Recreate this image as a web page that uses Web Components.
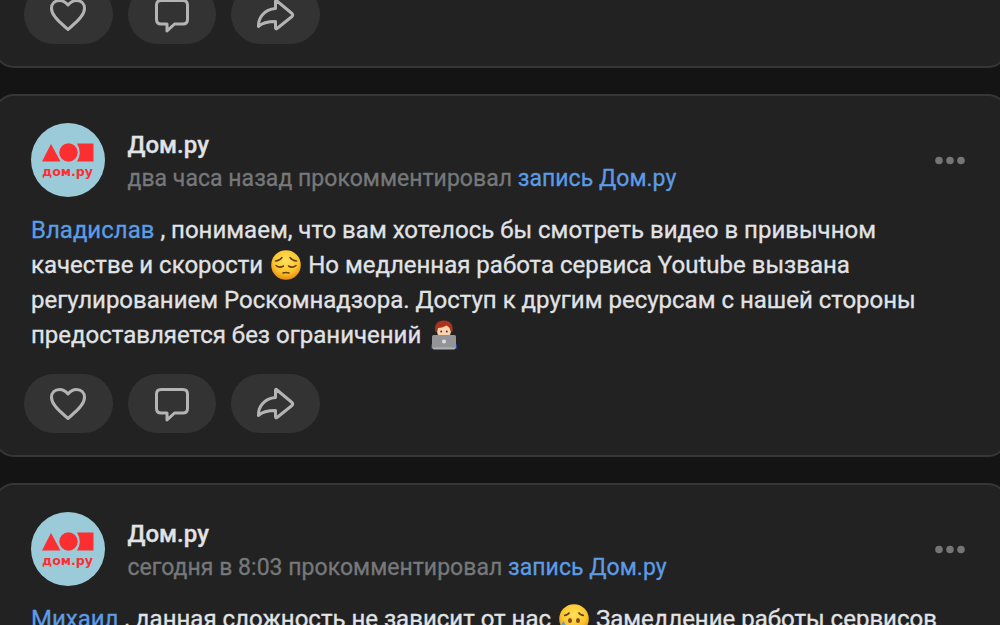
<!DOCTYPE html>
<html lang="ru">
<head>
<meta charset="utf-8">
<title>Дом.ру</title>
<style>
  body {
    margin: 0;
    height: 625px;
    overflow: hidden;
    background: #141414;
    color: #e1e3e6;
    font: 24px/35px Roboto, "Noto Sans", sans-serif;
    -webkit-text-stroke: .3px;
  }

  a { color: #5c9ce6; text-decoration: none; }
  .line { display: block; height: 35px; white-space: pre; }
</style>
</head>
<body>
<wall-feed>
  <wall-post class="previous"></wall-post>

  <wall-post>
    <post-header slot="header">
      <span slot="name">Дом.ру</span>
      <span class="meta">два часа назад прокомментировал <a>запись Дом.ру</a></span>
    </post-header>
    <span class="line"><a>Владислав</a> , понимаем, что вам хотелось бы смотреть видео в привычном</span>
    <span class="line">качестве и скорости <emoji-icon name="pensive"></emoji-icon> Но медленная работа сервиса Youtube вызвана</span>
    <span class="line">регулированием Роскомнадзора. Доступ к другим ресурсам с нашей стороны</span>
    <span class="line">предоставляется без ограничений <emoji-icon name="coder"></emoji-icon></span>
  </wall-post>

  <wall-post>
    <post-header slot="header">
      <span slot="name">Дом.ру</span>
      <span class="meta">сегодня в 8:03 прокомментировал <a>запись Дом.ру</a></span>
    </post-header>
    <span class="line"><a>Михаил</a> , данная сложность не зависит от нас <emoji-icon name="tear"></emoji-icon> Замедление работы сервисов</span>
  </wall-post>
</wall-feed>

<script>
class WallFeed extends HTMLElement {
  constructor() {
    super();
    this.attachShadow({ mode: "open" });
    this.shadowRoot.innerHTML = /* html */`
    <style>
      :host {
        display: flex;
        flex-direction: column;
        gap: 26px;
        margin: -40px -8px 0 -6px;
      }
    </style>
    <slot></slot>`;
  }
}

class WallPost extends HTMLElement {
  constructor() {
    super();
    this.attachShadow({ mode: "open" });
  }

  static get styles() {
    return /* css */`
      :host {
        display: flex;
        flex-direction: column;
        flex: none;
        box-sizing: border-box;
        height: 363px;
        padding: 27px 41px 22px 35px;
        background: #222;
        border: 2px solid #363637;
        border-radius: 20px;
      }

      :host(.previous) {
        height: 108px;
        padding-top: 0;
      }

      .text {
        margin-top: 16px;
      }

      :host(.previous) .text {
        display: none;
      }

      footer {
        display: flex;
        gap: 15px;
        margin: auto 0 0 -7px;
      }
    `;
  }

  connectedCallback() {
    this.shadowRoot.innerHTML = /* html */`
    <style>${WallPost.styles}</style>
    <slot name="header"></slot>
    <div class="text"><slot></slot></div>
    <footer>
      <action-button icon="like"></action-button>
      <action-button icon="comment"></action-button>
      <action-button icon="share"></action-button>
    </footer>`;
  }
}

class PostHeader extends HTMLElement {
  constructor() {
    super();
    this.attachShadow({ mode: "open" });
  }

  static get styles() {
    return /* css */`
      :host {
        display: flex;
        align-items: center;
        height: 74px;
      }

      .info {
        flex: 1;
        margin-left: 22.500px;
        padding-top: 4px;
        line-height: 33px;
        white-space: nowrap;
      }

      .name {
        font-weight: 500;
      }

      .when {
        font-size: 23px;
        letter-spacing: .03px;
        color: #76787a;
      }

      .more {
        width: 30px;
        height: 10px;
        fill: #757575;
      }
    `;
  }

  connectedCallback() {
    this.shadowRoot.innerHTML = /* html */`
    <style>${PostHeader.styles}</style>
    <brand-avatar></brand-avatar>
    <div class="info">
      <div class="name"><slot name="name"></slot></div>
      <div class="when"><slot></slot></div>
    </div>
    <svg class="more" viewBox="0 0 30 10">
      <circle cx="4" cy="5.500" r="3.8"/><circle cx="15" cy="5.500" r="3.8"/><circle cx="26" cy="5.500" r="3.8"/>
    </svg>`;
  }
}

class BrandAvatar extends HTMLElement {
  constructor() {
    super();
    this.attachShadow({ mode: "open" });
    this.shadowRoot.innerHTML = /* html */`
    <style>
      :host { display: block; width: 74px; height: 74px; }
      svg { display: block; }
      text { font: bold 12.500px "DejaVu Sans", sans-serif; }
    </style>
    <svg width="74" height="74" viewBox="0 0 74 74">
      <circle cx="37" cy="37" r="37" fill="#9bcbd9"/>
      <g fill="#fb2f32">
        <path d="M11 38.500 20 21 29.500 38.500Z"/>
        <circle cx="37.500" cy="29.500" r="9.200"/>
        <path d="M46 20.500H62.500V38.500H46Q51.500 29.500 46 20.500Z"/>
        <text x="11" y="53" textLength="51" lengthAdjust="spacingAndGlyphs">дом.ру</text>
      </g>
    </svg>`;
  }
}

const ACTION_ICONS = {
  like: `<path d="M20 34.500C16 30.500 3.500 22 3.500 13.500 3.500 8.500 7 5.500 11.500 5.500 15 5.500 17.500 7 20 10 22.500 7 25 5.500 28.500 5.500 33 5.500 36.500 8.500 36.500 13.500 36.500 22 24 30.500 20 34.500Z"/>`,
  comment: `<path d="M9 5.500H31Q35.500 5.500 35.500 10V24.500Q35.500 29 31 29H22.500L15 36V29H9Q4.500 29 4.500 24.500V10Q4.500 5.500 9 5.500Z"/>`,
  share: `<path d="M20.500 6.500Q20.500 4.500 22 6L37 18.500Q38.500 20 37 21.500L22 33.500Q20.500 34.500 20.500 32.500V26.500C11 26.500 7 28 3.500 31.500 3 23 9 14.500 20.500 13.500Z"/>`,
};

class ActionButton extends HTMLElement {
  constructor() {
    super();
    this.attachShadow({ mode: "open" });
  }

  connectedCallback() {
    this.shadowRoot.innerHTML = /* html */`
    <style>
      :host {
        display: flex;
        align-items: center;
        justify-content: center;
        width: 88.500px;
        height: 59px;
        border-radius: 30px;
        background: #333;
      }
      svg {
        fill: none;
        stroke: #b4b4b4;
        stroke-width: 3;
        stroke-linejoin: round;
      }
    </style>
    <svg width="40" height="40" viewBox="0 0 40 40">${ACTION_ICONS[this.getAttribute("icon")]}</svg>`;
  }
}

const FACE = `
  <circle cx="15" cy="15" r="14.800" fill="url(#skin)"/>
  <g fill="none" stroke="#654016" stroke-width="1.500" stroke-linecap="round">
    <path d="M4.500 11Q9 10.500 11 7.500M25.500 11Q21 10.500 19 7.500"/>
    <path d="M5 15.500Q8.500 18.500 12.500 16M25 15.500Q21.500 18.500 17.500 16"/>`;

const SKIN = `
  <defs><radialGradient id="skin" cx=".5" cy=".35" r=".65">
    <stop offset="0" stop-color="#ffe15a"/><stop offset=".65" stop-color="#fbc42d"/><stop offset="1" stop-color="#e58a12"/>
  </radialGradient></defs>`;

const EMOJI = {
  pensive: `${SKIN}${FACE}<path d="M12 23Q15 22 18 23"/></g>`,
  tear: `${SKIN}
    <circle cx="15" cy="15" r="14.800" fill="url(#skin)"/>
    <path d="M5 11.500Q9 11 10.500 8.500M25 11.500Q21 11 19.500 8.500" fill="none" stroke="#654016" stroke-width="1.500"/>
    <ellipse cx="11" cy="16.500" rx="2" ry="2.500" fill="#8a4b12"/><ellipse cx="19" cy="16.500" rx="2" ry="2.500" fill="#8a4b12"/>
    <path d="M11 24Q15 21 19 24" fill="none" stroke="#654016" stroke-width="1.500"/>
    <path d="M4.500 17Q8 22 7 25 4.500 28 2 25 1 22 4.500 17Z" fill="#55a9d8"/>`,
  coder: `
    <path d="M1.500 28.500Q2 20 9 19H21Q28 20 28.500 28.500Z" fill="#1f4d9d"/>
    <path d="M11 15H19V20H11Z" fill="#e8b088"/>
    <ellipse cx="15" cy="11" rx="7" ry="7.500" fill="#fbd3ae"/>
    <path d="M6.500 12Q4 1 15 .500 25 1 23.500 12L21.500 11Q21 7 17.500 5.500 13 8 9 8L8 12Z" fill="#a83420"/>
    <circle cx="12.200" cy="11.500" r=".9" fill="#3b2a20"/><circle cx="17.800" cy="11.500" r=".9" fill="#3b2a20"/>
    <rect x="3" y="15" width="24" height="14" rx="1.500" fill="#929498"/>
    <rect x="4" y="27.500" width="22" height="2" rx="1" fill="#b0b1b4"/>
    <circle cx="15" cy="21.500" r="2" fill="#dedee2"/>`,
};

class EmojiIcon extends HTMLElement {
  constructor() {
    super();
    this.attachShadow({ mode: "open" });
  }

  connectedCallback() {
    this.shadowRoot.innerHTML = /* html */`
    <style>
      :host {
        display: inline-flex;
        width: 30px;
        height: 30px;
        margin: 0 1px 0 2px;
        vertical-align: top;
        position: relative;
        top: 2px;
        white-space: normal;
      }
    </style>
    <svg width="30" height="30" viewBox="0 0 30 30">${EMOJI[this.getAttribute("name")]}</svg>`;
  }
}

customElements.define("wall-feed", WallFeed);
customElements.define("wall-post", WallPost);
customElements.define("post-header", PostHeader);
customElements.define("brand-avatar", BrandAvatar);
customElements.define("action-button", ActionButton);
customElements.define("emoji-icon", EmojiIcon);
</script>
</body>
</html>
